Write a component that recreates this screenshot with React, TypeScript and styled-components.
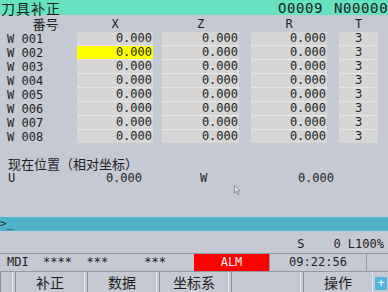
import React from 'react';
import styled, { createGlobalStyle } from 'styled-components';

const MONO = '"DejaVu Sans Mono", "Liberation Mono", monospace';
const CJK = '"Noto Sans CJK SC", "Noto Sans", sans-serif';

const GlobalStyle = createGlobalStyle`
  html, body { margin: 0; padding: 0; }
  body { background: #c5c9d3; }
`;

const Screen = styled.div`
  position: relative;
  width: 388px;
  height: 292px;
  background: #c5c9d3;
  display: flex;
  flex-direction: column;
  overflow: hidden;
  color: #1e1e1e;
  font-family: ${MONO};
`;

const TopBar = styled.div`
  height: 15px;
  background: #66e2c0;
  display: flex;
  align-items: center;
`;

const Title = styled.div`
  font-family: ${CJK};
  font-size: 14px;
  line-height: 1;
  letter-spacing: 1px;
  padding-left: 1px;
  flex: 1;
`;

const ProgNo = styled.div<{ $w: number }>`
  width: ${(p) => p.$w}px;
  font-size: 14px;
  line-height: 1;
  letter-spacing: 0.6px;
`;

const Table = styled.div`
  display: flex;
  height: 129px;
`;

const Column = styled.div<{ $w: number; $ml?: number }>`
  width: ${(p) => p.$w}px;
  margin-left: ${(p) => p.$ml ?? 0}px;
  display: flex;
  flex-direction: column;
`;

const HeadCell = styled.div<{ $cjk?: boolean }>`
  height: 17px;
  display: flex;
  align-items: center;
  justify-content: center;
  font-family: ${(p) => (p.$cjk ? CJK : MONO)};
  font-size: ${(p) => (p.$cjk ? 13 : 12)}px;
  line-height: 1;
  padding-left: ${(p) => (p.$cjk ? 14 : 0)}px;
`;

const Stack = styled.div`
  display: flex;
  flex-direction: column;
  background: #e6e6e6;
`;

const Cell = styled.div<{ $hl?: boolean; $center?: boolean }>`
  height: 13px;
  margin-top: 1px;
  background: ${(p) => (p.$hl ? '#ffff00' : '#d6d6d6')};
  font-size: 12px;
  line-height: 13px;
  display: flex;
  align-items: center;
  justify-content: ${(p) => (p.$center ? 'center' : 'flex-end')};
  padding-right: ${(p) => (p.$center ? 0 : 1)}px;
  &:first-child { margin-top: 0; }
`;

const RowLabel = styled.div`
  height: 14px;
  font-size: 12px;
  line-height: 14px;
  padding-left: 7px;
  white-space: pre;
`;

const PosTitle = styled.div`
  margin-top: 12px;
  height: 15px;
  padding-left: 8px;
  font-family: ${CJK};
  font-size: 13px;
  line-height: 1;
  display: flex;
  align-items: center;
`;

const PosRow = styled.div`
  display: flex;
  padding-left: 8px;
  gap: 58px;
  height: 13px;
  margin-top: 1px;
`;

const PosPair = styled.div`
  width: 134px;
  display: flex;
  justify-content: space-between;
  font-size: 12px;
  line-height: 13px;
`;

const Spacer = styled.div`
  flex: 1;
`;

const InputBar = styled.div`
  height: 14px;
  background: #50b4c8;
  font-size: 11px;
  line-height: 14px;
  white-space: pre;
`;

const SpindleLine = styled.div`
  height: 22px;
  display: flex;
  align-items: flex-end;
  justify-content: flex-end;
  padding-right: 4px;
  font-size: 12px;
  line-height: 17px;
  white-space: pre;
`;

const StatusBar = styled.div`
  height: 17px;
  display: flex;
  align-items: stretch;
  border-top: 1px solid #9498a2;
  border-bottom: 1px solid #9498a2;
`;

const Mode = styled.div`
  width: 194px;
  padding-left: 7px;
  box-sizing: border-box;
  font-size: 12px;
  line-height: 17px;
  white-space: pre;
`;

const Alarm = styled.div`
  width: 75px;
  background: #ff0000;
  color: #f4f4f4;
  font-size: 12px;
  line-height: 17px;
  text-align: center;
`;

const StatusBox = styled.div<{ $w: number }>`
  width: ${(p) => p.$w}px;
  box-sizing: border-box;
  border-left: 1px solid #9498a2;
  font-size: 12px;
  line-height: 17px;
  text-align: center;
`;

const SoftKeys = styled.div`
  height: 20px;
  display: flex;
  align-items: stretch;
  gap: 2px;
`;

const Key = styled.div<{ $w: number }>`
  width: ${(p) => p.$w}px;
  box-sizing: border-box;
  border-left: 1px solid #8c909a;
  border-right: 1px solid #e4e6eb;
  font-family: ${CJK};
  font-size: 14px;
  line-height: 1;
  display: flex;
  align-items: center;
  justify-content: center;
`;

const PlusKey = styled.div`
  width: 12px;
  height: 13px;
  margin-top: 5px;
  background: #4fb5dc;
  color: #ffffff;
  font-size: 12px;
  line-height: 13px;
  text-align: center;
`;

const Pointer = styled.svg`
  position: absolute;
  left: 234px;
  top: 185px;
`;

const rows = ['001', '002', '003', '004', '005', '006', '007', '008'];

function DataColumn({ head, w, ml, center, hlRow }: { head: string; w: number; ml: number; center?: boolean; hlRow?: number }) {
  return (
    <Column $w={w} $ml={ml}>
      <HeadCell>{head}</HeadCell>
      <Stack>
        {rows.map((r, i) => (
          <Cell key={r} $hl={hlRow === i} $center={center}>
            {center ? '3' : '0.000'}
          </Cell>
        ))}
      </Stack>
    </Column>
  );
}

export default function App() {
  return (
    <>
      <GlobalStyle />
      <Screen>
        <TopBar>
          <Title>刀具补正</Title>
          <ProgNo $w={56}>O0009</ProgNo>
          <ProgNo $w={54}>N00000</ProgNo>
        </TopBar>

        <Table>
          <Column $w={77}>
            <HeadCell $cjk>番号</HeadCell>
            {rows.map((r) => (
              <RowLabel key={r}>{`W ${r}`}</RowLabel>
            ))}
          </Column>
          <DataColumn head="X" w={76} ml={0} hlRow={1} />
          <DataColumn head="Z" w={77} ml={9} />
          <DataColumn head="R" w={76} ml={12} />
          <DataColumn head="T" w={39} ml={12} center />
        </Table>

        <PosTitle>现在位置（相对坐标）</PosTitle>
        <PosRow>
          <PosPair>
            <span>U</span>
            <span>0.000</span>
          </PosPair>
          <PosPair>
            <span>W</span>
            <span>0.000</span>
          </PosPair>
        </PosRow>

        <Spacer />

        <InputBar>{'>_'}</InputBar>
        <SpindleLine>{'S    0 L100%'}</SpindleLine>

        <StatusBar>
          <Mode>{'MDI  ****  ***     ***'}</Mode>
          <Alarm>ALM</Alarm>
          <StatusBox $w={97}>09:22:56</StatusBox>
          <StatusBox $w={22} />
        </StatusBar>

        <SoftKeys>
          <Key $w={13} />
          <Key $w={70}>补正</Key>
          <Key $w={70}>数据</Key>
          <Key $w={70}>坐标系</Key>
          <Key $w={70} />
          <Key $w={70}>操作</Key>
          <PlusKey>+</PlusKey>
        </SoftKeys>

        <Pointer width="7" height="10" viewBox="0 0 7 10">
          <path d="M0.5 0.5 L0.5 8 L2.3 6.3 L3.6 9.3 L4.8 8.8 L3.6 5.9 L6 5.9 Z" fill="#e8e8e8" stroke="#7a7a7a" strokeWidth="0.8" />
        </Pointer>
      </Screen>
    </>
  );
}
